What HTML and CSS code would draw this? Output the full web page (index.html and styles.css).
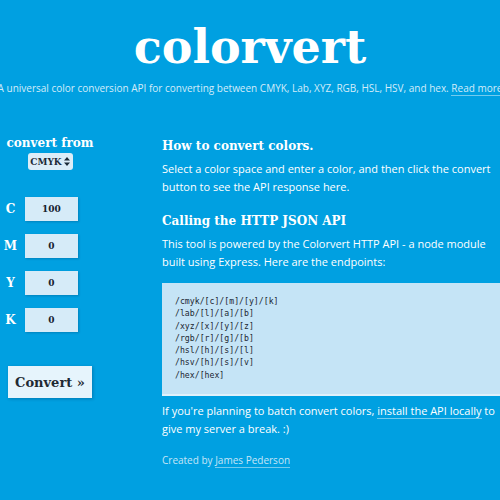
FILE: index.html
```html
<!DOCTYPE html>
<html lang="en">
<head>
<meta charset="utf-8">
<title>colorvert</title>
<link rel="stylesheet" href="styles.css">
</head>
<body>
<header class="hero">
  <h1 class="logo">colorvert</h1>
  <p class="tagline">A universal color conversion API for converting between CMYK, Lab, XYZ, RGB, HSL, HSV, and hex. <a class="link" href="#">Read more</a></p>
</header>
<main class="layout">
  <aside class="converter">
    <h3 class="conv-title">convert from</h3>
    <div class="select">CMYK<svg class="arrows" width="6" height="9" viewBox="0 0 6 9"><path d="M3 0L6 3.6H0Z M3 9L0 5.4H6Z" fill="#1d2b38"/></svg></div>
    <div class="fields">
      <div class="field"><span class="lbl">C</span><span class="input">100</span></div>
      <div class="field"><span class="lbl">M</span><span class="input">0</span></div>
      <div class="field"><span class="lbl">Y</span><span class="input">0</span></div>
      <div class="field"><span class="lbl">K</span><span class="input">0</span></div>
    </div>
    <button class="btn">Convert »</button>
  </aside>
  <section class="docs">
    <h3 class="doc-h">How to convert colors.</h3>
    <p class="doc-p">Select a color space and enter a color, and then click the convert button to see the API response here.</p>
    <h3 class="doc-h doc-h2">Calling the HTTP JSON API</h3>
    <p class="doc-p">This tool is powered by the Colorvert HTTP API - a node module built using Express. Here are the endpoints:</p>
    <pre class="code">/cmyk/[c]/[m]/[y]/[k]
/lab/[l]/[a]/[b]
/xyz/[x]/[y]/[z]
/rgb/[r]/[g]/[b]
/hsl/[h]/[s]/[l]
/hsv/[h]/[s]/[v]
/hex/[hex]</pre>
    <p class="doc-p">If you're planning to batch convert colors, <a class="link" href="#">install the API locally</a> to give my server a break. :)</p>
    <p class="credit">Created by <a class="link" href="#">James Pederson</a></p>
  </section>
</main>
</body>
</html>
```
FILE: styles.css
```css
html, body {
  margin: 0;
  padding: 0;
  background: #00a0e1;
  overflow: hidden;
  height: 500px;
}
body {
  font-family: "Open Sans", sans-serif;
  color: #ffffff;
}
.hero {
  text-align: center;
  padding-top: 21px;
}
.logo {
  margin: 0;
  font-family: "DejaVu Serif", serif;
  font-weight: bold;
  font-size: 46px;
  line-height: 52px;
  color: #ffffff;
}
.tagline {
  margin: 8px -100px 0;
  white-space: nowrap;
  font-size: 10px;
  line-height: 14px;
  color: #d3ecf9;
}
.link {
  color: inherit;
  text-decoration: none;
  border-bottom: 1px solid rgba(255,255,255,0.45);
}
.layout {
  display: flex;
  padding-top: 40px;
}
.converter {
  width: 100px;
  flex: none;
  display: flex;
  flex-direction: column;
  align-items: center;
}
.conv-title {
  margin: 0;
  font-family: "DejaVu Serif", serif;
  font-weight: bold;
  font-size: 12px;
  line-height: 16px;
}
.select {
  margin-top: 2px;
  height: 17px;
  width: 45px;
  box-sizing: border-box;
  display: flex;
  align-items: center;
  justify-content: center;
  gap: 2px;
  background: #dcedf8;
  border-radius: 3px;
  color: #1d2b38;
  font-family: "DejaVu Serif", serif;
  font-weight: bold;
  font-size: 9px;
}
.fields {
  margin-top: 27px;
  display: flex;
  flex-direction: column;
  gap: 13px;
  align-self: stretch;
}
.field {
  display: flex;
  align-items: center;
}
.lbl {
  width: 21px;
  text-align: center;
  font-family: "DejaVu Serif", serif;
  font-weight: bold;
  font-size: 12px;
}
.input {
  margin-left: 4px;
  width: 53px;
  height: 24px;
  background: #d6ebf8;
  color: #15222e;
  display: flex;
  align-items: center;
  justify-content: center;
  font-family: "DejaVu Serif", serif;
  font-weight: bold;
  font-size: 9px;
  box-shadow: 1px 1px 2px rgba(0, 40, 80, 0.25);
}
.btn {
  align-self: flex-start;
  margin: 34px 0 0 8px;
  width: 84px;
  height: 32px;
  border: none;
  background: #e6f4fc;
  color: #1f2a33;
  font-family: "DejaVu Serif", serif;
  font-weight: bold;
  font-size: 13px;
  box-shadow: 1px 1px 3px rgba(0, 40, 80, 0.3);
  padding: 0;
}
.docs {
  margin-left: 62px;
  width: 340px;
  flex: none;
}
.doc-h {
  margin: 3px 0 0;
  font-family: "DejaVu Serif", serif;
  font-weight: bold;
  font-size: 12px;
  line-height: 16px;
}
.doc-h2 {
  margin-top: 17px;
}
.doc-p {
  margin: 6px 0 0;
  font-size: 11px;
  line-height: 18px;
}
.code {
  margin: 12px -20px 0 0;
  padding: 12px 13px 13px;
  background: #c5e4f6;
  color: #1b2631;
  font-family: "DejaVu Sans Mono", monospace;
  font-size: 8.2px;
  line-height: 12.3px;
  border-bottom: 2px solid #e0f1fb;
}
.credit {
  margin: 15px 0 0;
  font-size: 10px;
  line-height: 14px;
  color: #c6e5f7;
}
```
